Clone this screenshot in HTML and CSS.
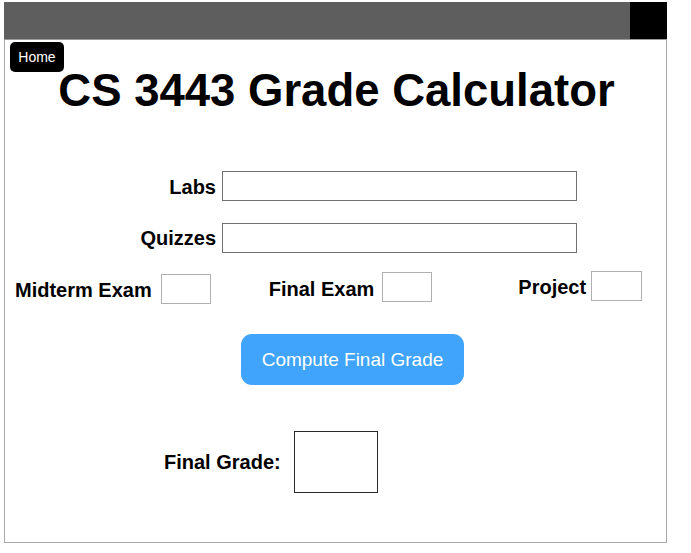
FILE: index.html
```html
<!DOCTYPE html>
<html lang="en">
<head>
<meta charset="utf-8">
<title>CS 3443 Grade Calculator</title>
<link rel="stylesheet" href="styles.css">
</head>
<body>
<div class="frame">
  <div class="topbar"><div class="corner"></div></div>
  <button class="home">Home</button>
  <h1 class="title">CS 3443 Grade Calculator</h1>
  <div class="row row-labs">
    <label class="label label-labs">Labs</label>
    <input class="field wide" type="text">
  </div>
  <div class="row row-quiz">
    <label class="label label-quiz">Quizzes</label>
    <input class="field wide" type="text">
  </div>
  <div class="row exams">
    <div class="group g-mid">
      <label class="label l-mid">Midterm Exam</label>
      <input class="field small" type="text">
    </div>
    <div class="group g-final">
      <label class="label l-final">Final Exam</label>
      <input class="field small" type="text">
    </div>
    <div class="group g-proj">
      <label class="label l-proj">Project</label>
      <input class="field small proj" type="text">
    </div>
  </div>
  <button class="compute">Compute Final Grade</button>
  <div class="row result">
    <span class="label l-result">Final Grade:</span>
    <div class="result-box"></div>
  </div>
</div>
</body>
</html>
```

FILE: styles.css
```css
* { box-sizing: border-box; }
html, body { margin: 0; padding: 0; background: #fff; }
body { font-family: "Liberation Sans", Arial, sans-serif; color: #000; }

.frame {
  margin: 2px 0 0 4px;
  width: 663px;
  height: 541px;
  border: 1px solid #a8a8a8;
  border-top: none;
  display: flex;
  flex-direction: column;
  align-items: flex-start;
}

.topbar {
  width: 663px;
  margin-left: -1px;
  height: 38px;
  background: #5e5e5e;
  border-bottom: 1px solid #9a9a9a;
  display: flex;
  justify-content: flex-end;
}
.corner { width: 37px; height: 37px; background: #000; }

.home {
  margin: 2px 0 0 5px;
  width: 54px;
  height: 30px;
  background: #000;
  color: #fff;
  border: none;
  border-radius: 5px;
  font-family: "Liberation Sans", Arial, sans-serif;
  font-size: 14px;
  padding: 0;
  position: relative;
  z-index: 1;
}

.title {
  align-self: stretch;
  margin: -8px 0 0 0;
  text-align: center;
  font-size: 45.5px;
  line-height: 54px;
  font-weight: bold;
  padding-left: 2px;
}

.row { display: flex; align-items: flex-start; }
.label { font-size: 20px; font-weight: bold; line-height: 23px; }

.row-labs { margin-top: 53px; }
.row-quiz { margin-top: 22px; }
.row-labs .label, .row-quiz .label {
  width: 211px;
  text-align: right;
  margin-right: 6px;
}
.label-labs { margin-top: 5px; }
.label-quiz { margin-top: 4px; }

.field {
  border: 1px solid #8a8a8a;
  background: #fff;
  height: 30px;
  padding: 0;
  margin: 0;
}
.wide { width: 355px; border-color: #707070; }
.small { width: 50px; border-color: #b0b0b0; }
.proj { width: 51px; }

.exams { margin-top: 18px; }
.group { display: flex; align-items: flex-start; }
.g-mid { margin: 3px 0 0 10px; gap: 9px; }
.l-mid { margin-top: 5px; }
.g-final { margin: 1px 0 0 58px; gap: 8px; }
.l-final { margin-top: 6px; }
.g-proj { margin: 0 0 0 86px; gap: 5px; }
.l-proj { margin-top: 5px; }

.compute {
  margin: 30px 0 0 236px;
  width: 223px;
  height: 51px;
  background: #40a4fc;
  color: #fff;
  border: none;
  border-radius: 11px;
  font-family: "Liberation Sans", Arial, sans-serif;
  font-size: 19px;
  padding: 0;
}

.result { margin: 46px 0 0 159px; gap: 13px; }
.l-result { margin-top: 20px; }
.result-box {
  width: 84px;
  height: 62px;
  border: 1px solid #2a2a2a;
}
```
